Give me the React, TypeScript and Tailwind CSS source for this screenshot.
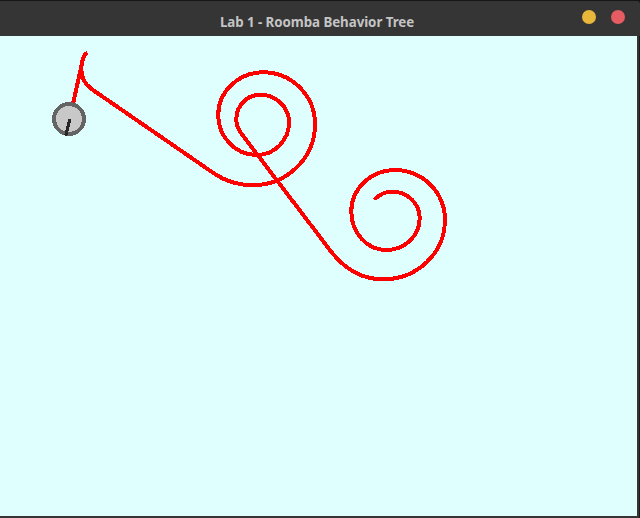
import React from "react";

const TRAIL = [
  "M87.5 53.2",
  "C83.5 53.5 82.4 60 81.2 67",
  "C81.5 79 85 84 91.5 89",
  "L214 173.4",
  "Q231 185.2 252.7 185.2",
  "A62.3 60.9 0 0 0 315 124.3",
  "A51.7 52 0 0 0 263.3 72.3",
  "A45.3 42.7 0 0 0 218.2 115",
  "A38.7 40 0 0 0 256.7 155",
  "A32.3 32.7 0 0 0 289 122.3",
  "A28.7 27.6 0 0 0 260.3 94.7",
  "A24 24.6 0 0 0 236.3 119.3",
  "Q236.3 126 240.5 132.5",
  "L328 247.5",
  "Q351 279.5 383.3 279.3",
  "A61.7 59.3 0 0 0 445 220",
  "A50.3 50 0 0 0 394.7 170",
  "A43.4 41.7 0 0 0 351.3 211.7",
  "A35 38.3 0 0 0 386.3 250",
  "A33.4 31.7 0 0 0 419.7 218.3",
  "A27 26.6 0 0 0 392.7 191.7",
  "Q382 191.5 374.5 199.5",
].join(" ");

function TitleBar() {
  return (
    <header className="bg-[#161616] pt-px">
      <div className="grid h-[35px] grid-cols-[1fr_auto_1fr] rounded-tr-[3px] bg-[#353535] pr-[15px]">
        <span />
        <h1 className="pt-[11px] pl-[9px] font-['Noto_Sans',sans-serif] text-[13.33px] leading-[20px] font-bold tracking-[-0.06px] whitespace-nowrap text-[#c4c4c4]">
          Lab 1 - Roomba Behavior Tree
        </h1>
        <div className="flex justify-end gap-[15px] pt-[9px]">
          <button aria-label="Minimize" className="size-3.5 rounded-full bg-[#e9b73a]" />
          <button aria-label="Close" className="size-3.5 rounded-full bg-[#e55c62]" />
        </div>
      </div>
    </header>
  );
}

function World() {
  return (
    <svg
      className="block h-[480px] w-[637px] bg-[#dfffff]"
      viewBox="0 36 637 480"
      fill="none"
      shapeRendering="crispEdges"
    >
      <path d={TRAIL} stroke="#ff0000" strokeWidth="4" />
      <path d="M81.2 67L73 104" stroke="#ff0000" strokeWidth="4" />
      <circle cx="69" cy="119" r="15" fill="#c8c8c8" stroke="#646464" strokeWidth="4" />
      <path d="M69.8 119L65.8 135.8" stroke="#282828" strokeWidth="3.2" />
    </svg>
  );
}

export default function App() {
  return (
    <main className="flex h-[518px] w-[640px] flex-col overflow-hidden bg-[#353535]">
      <TitleBar />
      <div className="flex flex-1 items-start border-r border-[#1b1b1b]">
        <World />
      </div>
    </main>
  );
}
